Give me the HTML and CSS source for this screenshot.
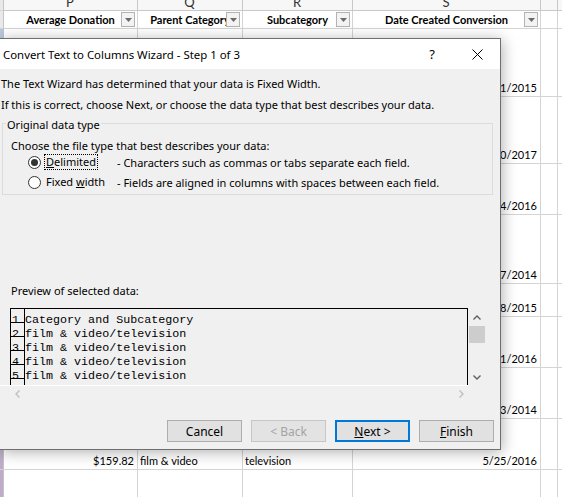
FILE: index.html
```html
<!DOCTYPE html>
<html>
<head>
<meta charset="utf-8">
<link rel="stylesheet" href="styles.css">
</head>
<body>
<div class="sheet">
  <div class="c rh top"></div><div class="c lt"><span>P</span></div><div class="c lt"><span>Q</span></div><div class="c lt"><span>R</span></div><div class="c lt"><span>S</span></div><div class="c lt"></div><div class="c lt"></div>

  <div class="c rh top"></div>
  <div class="c f">Average Donation<span class="dd"><svg width="7" height="4" viewBox="0 0 7 4"><path d="M0 0H7L3.5 4Z" fill="#6b6b6b"/></svg></span></div>
  <div class="c f">Parent Category<span class="dd"><svg width="7" height="4" viewBox="0 0 7 4"><path d="M0 0H7L3.5 4Z" fill="#6b6b6b"/></svg></span></div>
  <div class="c f">Subcategory<span class="dd"><svg width="7" height="4" viewBox="0 0 7 4"><path d="M0 0H7L3.5 4Z" fill="#6b6b6b"/></svg></span></div>
  <div class="c f">Date Created Conversion<span class="dd"><svg width="7" height="4" viewBox="0 0 7 4"><path d="M0 0H7L3.5 4Z" fill="#6b6b6b"/></svg></span></div>
  <div class="c f"></div><div class="c"></div>

  <div class="c rh sel"></div><div class="c r"></div><div class="c"></div><div class="c"></div><div class="c r">12/11/2015</div><div class="c"></div><div class="c"></div>
  <div class="c rh"></div><div class="c r"></div><div class="c"></div><div class="c"></div><div class="c r">11/10/2017</div><div class="c"></div><div class="c"></div>
  <div class="c rh"></div><div class="c r"></div><div class="c"></div><div class="c"></div><div class="c r">6/14/2016</div><div class="c"></div><div class="c"></div>
  <div class="c rh"></div><div class="c r"></div><div class="c"></div><div class="c"></div><div class="c r">3/17/2014</div><div class="c"></div><div class="c"></div>
  <div class="c rh"></div><div class="c r"></div><div class="c"></div><div class="c"></div><div class="c r">4/28/2015</div><div class="c"></div><div class="c"></div>
  <div class="c rh"></div><div class="c r"></div><div class="c"></div><div class="c"></div><div class="c r">2/21/2016</div><div class="c"></div><div class="c"></div>
  <div class="c rh"></div><div class="c r"></div><div class="c"></div><div class="c"></div><div class="c r">9/23/2014</div><div class="c"></div><div class="c"></div>
  <div class="c rh pur"></div><div class="c r">$159.82</div><div class="c">film &amp; video</div><div class="c">television</div><div class="c r">5/25/2016</div><div class="c"></div><div class="c"></div>
  <div class="c rh pur"></div><div class="c r"></div><div class="c"></div><div class="c"></div><div class="c r"></div><div class="c"></div><div class="c"></div>
</div>

<div class="dlg">
  <div class="titlebar">
    <span class="ttl">Convert Text to Columns Wizard - Step 1 of 3</span>
    <span class="help">?</span>
    <svg class="close" width="11" height="11" viewBox="0 0 11 11"><path d="M0.5 0.5L10.5 10.5M10.5 0.5L0.5 10.5" stroke="#000" stroke-width="1"/></svg>
  </div>
  <div class="dbody">
    <p class="msg">The Text Wizard has determined that your data is Fixed Width.</p>
    <p class="msg">If this is correct, choose Next, or choose the data type that best describes your data.</p>
    <fieldset class="grp">
      <legend>Original data type</legend>
      <div class="choose">Choose the file type that best describes your data:</div>
      <div class="opt-row">
        <span class="radio on"><span class="dot"></span></span>
        <span class="opt"><span class="lbl focus"><u>D</u>elimited</span></span>
        <span class="desc">- Characters such as commas or tabs separate each field.</span>
      </div>
      <div class="opt-row second">
        <span class="radio"></span>
        <span class="opt"><span class="lbl">Fixed <u>w</u>idth</span></span>
        <span class="desc">- Fields are aligned in columns with spaces between each field.</span>
      </div>
    </fieldset>
    <div class="pv-label">Preview of selected data:</div>
    <div class="pv">
      <div class="pv-box">
        <div class="pr"><span class="pn">1</span><span class="pt">Category and Subcategory</span></div>
        <div class="pr"><span class="pn">2</span><span class="pt">film &amp; video/television</span></div>
        <div class="pr"><span class="pn">3</span><span class="pt">film &amp; video/television</span></div>
        <div class="pr"><span class="pn">4</span><span class="pt">film &amp; video/television</span></div>
        <div class="pr"><span class="pn">5</span><span class="pt">film &amp; video/television</span></div>
        <div class="pr"><span class="pn">6</span><span class="pt">film &amp; video/television</span></div>
      </div>
      <div class="vscroll">
        <div class="sb-btn up"><svg width="8" height="5" viewBox="0 0 8 5"><path d="M0.5 4.5L4 1L7.5 4.5" fill="none" stroke="#606060" stroke-width="1.4"/></svg></div>
        <div class="thumb"></div>
        <div class="track"></div>
        <div class="sb-btn down"><svg width="8" height="5" viewBox="0 0 8 5"><path d="M0.5 0.5L4 4L7.5 0.5" fill="none" stroke="#606060" stroke-width="1.4"/></svg></div>
      </div>
    </div>
    <div class="hscroll">
      <svg width="5" height="8" viewBox="0 0 5 8"><path d="M4.5 0.5L1 4L4.5 7.5" fill="none" stroke="#bfbfbf" stroke-width="1.4"/></svg>
      <svg width="5" height="8" viewBox="0 0 5 8"><path d="M0.5 0.5L4 4L0.5 7.5" fill="none" stroke="#bfbfbf" stroke-width="1.4"/></svg>
    </div>
    <div class="btns">
      <div class="btn">Cancel</div>
      <div class="btn dis">&lt; Back</div>
      <div class="btn def"><span><u>N</u>ext &gt;</span></div>
      <div class="btn"><span><u>F</u>inish</span></div>
    </div>
  </div>
</div>
</body>
</html>
```

FILE: styles.css
```css
html, body {
  margin: 0;
  padding: 0;
}
body {
  width: 562px;
  height: 497px;
  overflow: hidden;
  position: relative;
  background: #fff;
  font-family: Lato, "Liberation Sans", sans-serif;
}

/* spreadsheet */
.sheet {
  display: grid;
  grid-template-columns: 4px 134px 105px 110px 188px 17px 40px;
  grid-template-rows: 11px 18px 68px 67px 51px 69px 33px 51px 51px 51px 40px;
}
.c {
  box-sizing: border-box;
  border-right: 1px solid #d4d4d4;
  border-bottom: 1px solid #d4d4d4;
  font-size: 11px;
  line-height: 14px;
  padding: 0 3px 1px 2px;
  display: flex;
  align-items: flex-end;
  white-space: nowrap;
  color: #000;
  min-width: 0;
  overflow: hidden;
}
.c.r {
  justify-content: flex-end;
}
.rh {
  padding: 0;
  background: #fff;
  border-right-color: #c4c4c4;
}
.rh.top {
  background: #e9e9e9;
}
.rh.sel {
  background: #b7c9e2;
}
.rh.pur {
  background: #bfaccb;
}
.lt {
  background: #f7f7f7;
  border-color: #c8c8c8;
  justify-content: center;
  align-items: flex-start;
  font-size: 13px;
  color: #333;
}
.lt span {
  display: block;
  line-height: 14px;
  margin-top: -5px;
}
.f {
  position: relative;
  font-weight: 700;
  justify-content: center;
  align-items: center;
  padding: 0 2px;
}
.dd {
  position: absolute;
  right: 2px;
  top: 1px;
  width: 14px;
  height: 15px;
  box-sizing: border-box;
  border: 1px solid #b3b3b3;
  background: #f3f3f3;
  display: grid;
  place-items: center;
}
.dd svg {
  display: block;
}

/* dialog */
.dlg {
  position: absolute;
  left: 0;
  top: 38px;
  width: 501px;
  height: 412px;
  box-sizing: border-box;
  border: 1px solid #6f6f6f;
  border-left: none;
  background: #f0f0f0;
  box-shadow: 1px 2px 14px rgba(0, 0, 0, 0.32);
  font-family: "Noto Sans", "Open Sans", sans-serif;
  font-size: 11px;
  color: #000;
  display: flex;
  flex-direction: column;
}
.titlebar {
  height: 30px;
  flex: none;
  background: #fff;
  display: flex;
  align-items: center;
  padding: 0 17px 0 3px;
}
.ttl {
  font-size: 11.4px;
}
.help {
  margin-left: auto;
  font-size: 13px;
  margin-right: 37px;
}
.close {
  display: block;
}
.dbody {
  flex: 1;
  padding-top: 4px;
  display: flex;
  flex-direction: column;
}
.msg {
  margin: 0;
  padding-left: 1px;
  line-height: 21px;
  white-space: nowrap;
}
.grp {
  margin: -1px 7px 0 2px;
  padding: 6px 0 5px 8px;
  border: 1px solid #dcdcdc;
  min-width: 0;
}
.grp legend {
  font-size: 11px;
  line-height: 14px;
  padding: 4px 1px 0;
  margin-left: -5px;
}
.choose {
  line-height: 16px;
}
.opt-row {
  display: flex;
  align-items: center;
  height: 14px;
  padding-left: 17px;
  white-space: nowrap;
  margin-top: 1px;
}
.opt-row.second {
  margin-top: 6px;
}
.radio {
  width: 13px;
  height: 13px;
  box-sizing: border-box;
  border: 1px solid #333;
  border-radius: 50%;
  background: #fff;
  display: grid;
  place-items: center;
  flex: none;
}
.radio .dot {
  width: 7px;
  height: 7px;
  border-radius: 50%;
  background: #333;
}
.opt {
  width: 73px;
  margin-left: 3px;
  flex: none;
}
.lbl {
  display: inline-block;
  border: 1px dotted transparent;
  padding: 0 1px;
  line-height: 14px;
}
.lbl.focus {
  border-color: #000;
}
.pv-label {
  margin-top: 88px;
  padding-left: 11px;
  line-height: 16px;
}
.pv {
  margin-top: 9px;
  padding-left: 10px;
  display: flex;
  height: 77px;
}
.pv-box {
  width: 458px;
  height: 77px;
  box-sizing: border-box;
  border-top: 1px solid #000;
  border-right: 1px solid #000;
  overflow: hidden;
  font-family: "Liberation Mono", monospace;
  font-size: 11.7px;
}
.pr {
  display: flex;
  height: 14px;
}
.pn {
  width: 15px;
  height: 14px;
  box-sizing: border-box;
  border: 1px solid #000;
  border-top: none;
  padding-left: 1px;
  line-height: 22px;
  flex: none;
}
.pt {
  line-height: 22px;
  height: 13px;
  white-space: pre;
}
.vscroll {
  width: 16px;
  margin-left: 1px;
  display: flex;
  flex-direction: column;
}
.sb-btn {
  display: grid;
  place-items: center;
}
.sb-btn svg {
  display: block;
}
.sb-btn.up {
  height: 18px;
}
.sb-btn.down {
  height: 16px;
}
.thumb {
  height: 17px;
  background: #cdcdcd;
}
.track {
  flex: 1;
}
.hscroll {
  height: 16px;
  border-top: 1px solid #fff;
  display: flex;
  align-items: center;
  justify-content: space-between;
  padding: 0 4px 0 15px;
  box-sizing: content-box;
  width: 449px;
}
.hscroll svg {
  display: block;
}
.btns {
  margin-top: 18px;
  display: flex;
  justify-content: flex-end;
  gap: 9px;
  padding-right: 6px;
}
.btn {
  width: 75px;
  height: 22px;
  box-sizing: border-box;
  border: 1px solid #adadad;
  background: #e1e1e1;
  font-size: 12px;
  display: flex;
  align-items: center;
  justify-content: center;
}
.btn.dis {
  color: #a3a3a3;
  border-color: #c6c6c6;
  background: #e3e3e3;
}
.btn.def {
  border: 2px solid #0078d7;
}
```
